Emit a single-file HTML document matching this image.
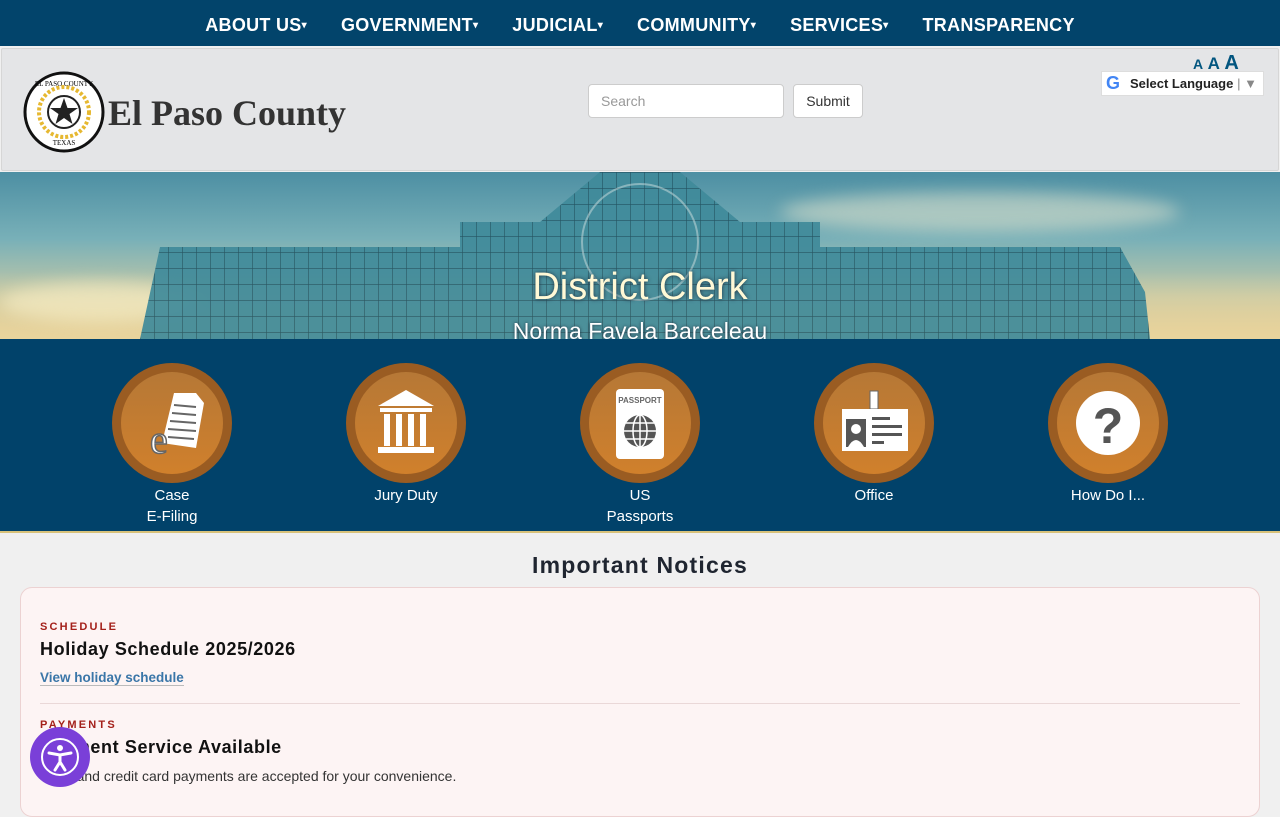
<!DOCTYPE html>
<html><head><meta charset="utf-8"><style>
*{margin:0;padding:0;box-sizing:border-box}
body{width:1280px;height:800px;overflow:hidden;background:#f0f0f0;font-family:"Liberation Sans",Arial,sans-serif;position:relative}
.nav{position:absolute;left:0;top:0;width:1280px;height:46px;background:#02446b;display:flex;justify-content:center;gap:0}
.nav span{color:#fff;font-weight:bold;font-size:18px;line-height:50px;padding:0 17px;letter-spacing:.3px}
.nav span small{font-size:10px;vertical-align:3px}
.hdr{position:absolute;left:1px;top:48px;width:1278px;height:123px;background:#e4e5e7;border:1px solid #d6d6d6;border-radius:2px}
.title{position:absolute;left:108px;top:92px;font-family:"Liberation Serif",serif;font-weight:bold;font-size:36px;color:#333}
.search{position:absolute;left:588px;top:84px;width:196px;height:34px;background:#fff;border:1px solid #ccc;border-radius:4px;font-size:14px;color:#999;padding:8px 12px}
.sub{position:absolute;left:793px;top:84px;width:70px;height:34px;background:#fff;border:1px solid #ccc;border-radius:4px;font-size:14px;color:#333;text-align:center;line-height:32px}
.aaa{position:absolute;left:1193px;top:52px;color:#02557f;font-weight:bold}
.lang{position:absolute;left:1101px;top:71px;width:163px;height:25px;background:#fff;border:1px solid #ddd;font-size:13px;font-weight:bold;color:#222;line-height:23px;padding-left:28px}
.hero{position:absolute;left:0;top:172px;width:1280px;height:167px;overflow:hidden;background:linear-gradient(180deg,#4d8fa3 0%,#78b0b8 40%,#c6c9a6 75%,#e2c98f 100%)}
.blue{position:absolute;left:0;top:339px;width:1280px;height:194px;background:#01426a;border-bottom:2px solid #d8c27a}
.ic{position:absolute;width:120px;height:120px;border-radius:50%;background:#9a5c22;top:24px}
.ic .in{position:absolute;left:9px;top:9px;width:102px;height:102px;border-radius:50%;background:linear-gradient(180deg,#b67836,#d0802c)}
.ic svg{position:absolute;left:0;top:0}
.lbl{position:absolute;width:200px;text-align:center;color:#fff;font-size:15px;line-height:21px;top:146px}
h2{position:absolute;left:0;width:1280px;top:552px;text-align:center;font-size:23px;color:#1f2530;letter-spacing:1.2px}
.card{position:absolute;left:20px;top:587px;width:1240px;height:230px;background:#fdf4f4;border:1px solid #ecd2d2;border-radius:12px}
.cat{position:absolute;left:19px;color:#a4201a;font-size:11px;font-weight:bold;letter-spacing:2.2px}
.ct{position:absolute;left:19px;color:#111;font-size:18px;font-weight:bold;letter-spacing:.6px}
.acc{position:absolute;left:30px;top:727px;width:60px;height:60px;border-radius:50%;background:#7a3fd8}
</style></head><body>
<div class="nav"><span>ABOUT US<small>▾</small></span><span>GOVERNMENT<small>▾</small></span><span>JUDICIAL<small>▾</small></span><span>COMMUNITY<small>▾</small></span><span>SERVICES<small>▾</small></span><span>TRANSPARENCY</span></div>
<div class="hdr"></div>
<svg style="position:absolute;left:23px;top:71px" width="82" height="82" viewBox="0 0 82 82"><circle cx="41" cy="41" r="39" fill="#fff" stroke="#111" stroke-width="3"/><circle cx="41" cy="41" r="25" fill="none" stroke="#e6b830" stroke-width="4" stroke-dasharray="3 2"/><circle cx="41" cy="41" r="16" fill="#fff" stroke="#222" stroke-width="2"/><polygon points="41,27 44.5,37 55,37 46.5,43 49.5,53 41,47 32.5,53 35.5,43 27,37 37.5,37" fill="#222"/><text x="41" y="15" font-size="7" text-anchor="middle" font-family="Liberation Serif">EL PASO COUNTY</text><text x="41" y="74" font-size="7" text-anchor="middle" font-family="Liberation Serif">TEXAS</text></svg>
<div class="title">El Paso County</div>
<div class="search">Search</div><div class="sub">Submit</div>
<div class="aaa"><span style="font-size:14px">A</span> <span style="font-size:17px">A</span> <span style="font-size:20px">A</span></div>
<div class="lang"><span style="position:absolute;left:4px;top:0;font-size:18px;color:#4285f4">G</span>Select Language <span style="color:#888;position:absolute;right:6px;font-weight:normal">| ▼</span></div>
<div class="hero">
<div style="position:absolute;left:0;top:100px;width:1280px;height:67px;background:linear-gradient(180deg,rgba(240,220,170,0),rgba(235,215,160,.8))"></div>
<div style="position:absolute;left:780px;top:20px;width:400px;height:40px;border-radius:50%;background:rgba(240,235,210,.5);filter:blur(8px)"></div>
<div style="position:absolute;left:0;top:110px;width:200px;height:40px;border-radius:50%;background:rgba(250,240,200,.6);filter:blur(8px)"></div>
<svg width="1280" height="167" style="position:absolute;left:0;top:0"><defs><pattern id="g" width="14" height="16" patternUnits="userSpaceOnUse"><rect width="14" height="16" fill="#3f8a9a"/><path d="M0 0H14M0 0V16" stroke="#1e4c5a" stroke-width="1.2"/></pattern></defs>
<polygon points="140,167 160,75 460,75 460,50 540,50 600,0 680,0 740,50 820,50 820,75 1120,75 1145,120 1150,167" fill="url(#g)" opacity=".92"/>
<circle cx="640" cy="70" r="58" fill="none" stroke="#cfe0e0" stroke-width="2" opacity=".5"/></svg>
<div style="position:absolute;width:1280px;text-align:center;top:94px;color:#fff9d6;font-size:38px;text-shadow:0 0 4px #234">District Clerk</div>
<div style="position:absolute;width:1280px;text-align:center;top:146px;color:#fff;font-size:23px;text-shadow:0 0 3px #234">Norma Favela Barceleau</div>
</div>
<div class="blue">
<div class="ic" style="left:112px"><div class="in"></div><svg width="120" height="120"><polygon points="62,30 84,30 92,40 84,85 50,80" fill="#fff"/><g stroke="#666" stroke-width="2"><path d="M62 42L84 44M60 50L84 52M58 58L84 60M56 66L84 68M56 74L82 76"/></g><text x="38" y="90" font-size="40" fill="#fff" stroke="#666" stroke-width="1.5" font-family="Liberation Serif">e</text></svg></div>
<div class="ic" style="left:346px"><div class="in"></div><svg width="120" height="120"><polygon points="60,27 88,43 32,43" fill="#fff"/><rect x="34" y="45" width="52" height="4" fill="#fff"/><g fill="#fff"><rect x="38" y="51" width="6" height="32"/><rect x="50" y="51" width="6" height="32"/><rect x="62" y="51" width="6" height="32"/><rect x="74" y="51" width="6" height="32"/></g><rect x="32" y="84" width="56" height="6" fill="#fff"/></svg></div>
<div class="ic" style="left:580px"><div class="in"></div><svg width="120" height="120"><rect x="36" y="26" width="48" height="70" rx="4" fill="#fff"/><text x="60" y="40" font-size="8" font-weight="bold" text-anchor="middle" fill="#666">PASSPORT</text><circle cx="60" cy="68" r="16" fill="#555"/><g stroke="#fff" stroke-width="1.5" fill="none"><ellipse cx="60" cy="68" rx="7" ry="16"/><path d="M44 68H76M46 60H74M46 76H74M60 52V84"/></g></svg></div>
<div class="ic" style="left:814px"><div class="in"></div><svg width="120" height="120"><rect x="56" y="28" width="8" height="18" fill="#fff" stroke="#666"/><rect x="28" y="46" width="66" height="42" fill="#fff"/><rect x="32" y="56" width="20" height="28" fill="#555"/><circle cx="42" cy="66" r="5" fill="#fff"/><path d="M34 84Q42 70 50 84Z" fill="#fff"/><g fill="#555"><rect x="58" y="54" width="18" height="3"/><rect x="58" y="62" width="30" height="3"/><rect x="58" y="70" width="30" height="3"/><rect x="58" y="78" width="12" height="3"/></g></svg></div>
<div class="ic" style="left:1048px"><div class="in"></div><svg width="120" height="120"><circle cx="60" cy="60" r="32" fill="#fff"/><text x="60" y="80" font-size="50" font-weight="bold" text-anchor="middle" fill="#555">?</text></svg></div>
<div class="lbl" style="left:72px">Case<br>E-Filing</div>
<div class="lbl" style="left:306px">Jury Duty</div>
<div class="lbl" style="left:540px">US<br>Passports</div>
<div class="lbl" style="left:774px">Office</div>
<div class="lbl" style="left:1008px">How Do I...</div>
</div>
<h2>Important Notices</h2>
<div class="card">
<div class="cat" style="top:33px">SCHEDULE</div>
<div class="ct" style="top:51px">Holiday Schedule 2025/2026</div>
<div style="position:absolute;left:19px;top:82px;color:#3a76a8;font-size:13.5px;font-weight:bold;border-bottom:1px solid #bbb">View holiday schedule</div>
<div style="position:absolute;left:19px;right:19px;top:115px;border-top:1px solid #ead8d8"></div>
<div class="cat" style="top:131px">PAYMENTS</div>
<div class="ct" style="top:149px">Payment Service Available</div>
<div style="position:absolute;left:19px;top:180px;color:#333;font-size:14px">Cash and credit card payments are accepted for your convenience.</div>
</div>
<div class="acc"><svg width="60" height="60"><circle cx="30" cy="30" r="18" fill="none" stroke="#fff" stroke-width="2"/><circle cx="30" cy="21" r="3" fill="#fff"/><path d="M19 26L30 28L41 26M30 28V35L25 43M30 35L35 43" stroke="#fff" stroke-width="3" fill="none" stroke-linecap="round"/></svg></div>
</body></html>
